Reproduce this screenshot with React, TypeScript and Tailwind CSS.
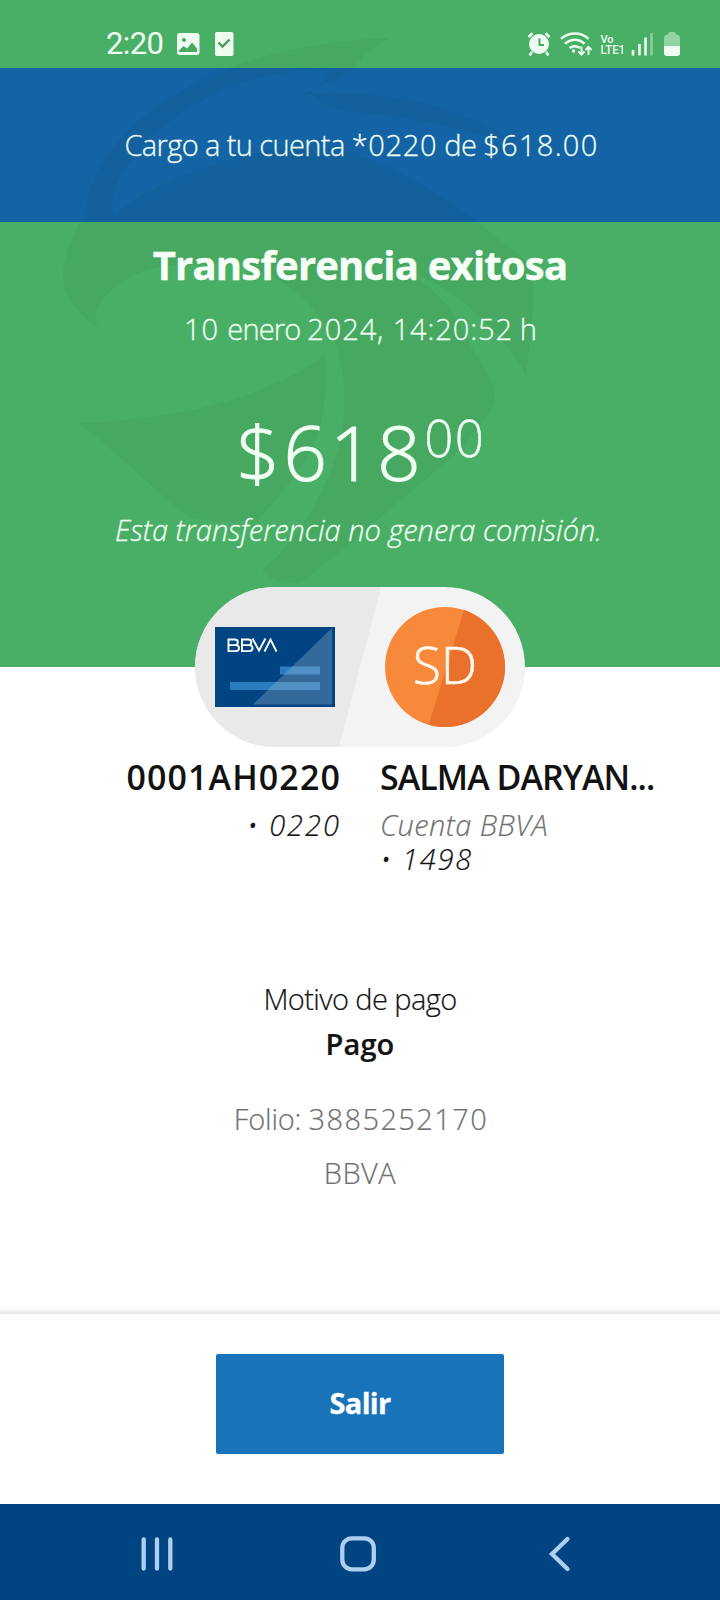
import type { ReactNode } from "react";

function Watermark() {
  return (
    <svg className="pointer-events-none absolute inset-0" width="720" height="667" viewBox="0 0 720 667" fill="#1a1a00" fillOpacity="0.043">
      <path d="M98 328C72 310 62 290 63 272C66 240 84 222 88 198C98 150 150 98 230 68C280 48 340 40 390 38C372 46 360 60 352 70C330 84 312 88 300 96C320 90 400 94 440 108C470 118 500 130 520 142C460 132 420 116 350 112C330 110 310 98 312 90C340 70 330 64 290 72C220 80 165 120 140 150C122 172 106 194 114 216C140 190 200 166 260 152C310 140 350 150 390 168C430 186 470 214 500 240C518 252 530 262 533 272C535 310 530 340 526 375C510 345 490 325 470 308C450 290 425 276 400 268C440 290 462 320 470 345C480 362 496 380 495 400C486 430 440 468 395 505C355 540 330 560 300 583C285 584 268 580 262 570C300 540 325 490 338 450C348 410 346 375 336 345C322 312 292 280 250 268C200 258 140 262 112 290C96 304 92 316 98 328Z" />
      <path d="M78 423C180 420 270 396 325 355C328 400 322 440 302 464C284 492 270 508 258 519C235 522 205 524 184 514C150 486 115 450 78 423Z" />
    </svg>
  );
}

function StatusBar() {
  return (
    <div className="flex h-[68px] items-start pl-[106px] text-[#eefdf0]">
      <span className="mt-[24px] h-[40px] w-[70px] font-[Roboto] text-[31px] leading-[40px] font-normal tracking-[-0.6px] [-webkit-text-stroke:0px]">2:20</span>
      <svg className="mt-[32px]" width="60" height="26" viewBox="176 32 60 26">
        <rect x="177" y="33" width="22.5" height="22" rx="3" fill="currentColor" />
        <circle cx="184" cy="40" r="2" fill="#49a762" />
        <path d="M179 52v-1.500l4.500-4.500 3.500 2.500 5-6 5 6v3.500Z" fill="#49a762" />
        <rect x="215" y="32" width="18.500" height="24" rx="2" fill="currentColor" />
        <path d="m218.500 42.500 4 4 7-7" fill="none" stroke="#459a5c" strokeWidth="2.400" />
      </svg>
      <svg className="mt-[30px] ml-[290px]" width="156" height="28" viewBox="526 30 156 28" fill="none" stroke="currentColor">
        <circle cx="539" cy="44" r="10" fill="currentColor" stroke="none" />
        <path d="m528.500 37 4-3.800M549.500 37l-4-3.800M532 52l-2.500 3.500M546 52l2.500 3.500" strokeWidth="2.600" />
        <path d="M539.500 38.500v6.500h4.500" stroke="#49a762" strokeWidth="2" />
        <path d="M561 38.800c8-7.200 20-7.200 27.500 0M565 43.800c6-5.300 13.500-5.300 19.500 0M569.500 48c3-2.500 7.500-2.500 10.500 0" strokeWidth="2.500" />
        <circle cx="573.500" cy="51" r="1.700" fill="currentColor" stroke="none" />
        <path d="M581.500 46.500v8m-3-3 3 3.200 3-3.200M588.500 55v-8m-3 3 3-3.200 3 3.200" strokeWidth="1.900" />
        <text x="600.500" y="42.500" fill="currentColor" stroke="none" className="font-[Roboto] text-[11px] font-medium">Vo</text>
        <text x="600.500" y="53.500" fill="currentColor" stroke="none" textLength="24.500" lengthAdjust="spacingAndGlyphs" className="font-[Roboto] text-[12px] font-medium">LTE1</text>
        <path d="M633 50v5.500M639.500 44v11.500M645.500 37.500v18" strokeWidth="2.600" />
        <path d="M651.500 33v22.500" strokeWidth="2.600" opacity="0.400" />
        <path d="M668 34.500q0-2.500 2-2.500h4q2 0 2 2.500 4 0 4 4V46h-16v-7.500q0-4 4-4Z" fill="currentColor" stroke="none" opacity="0.450" />
        <path d="M664 46h16v7q0 3-3 3h-10q-3 0-3-3Z" fill="currentColor" stroke="none" />
      </svg>
    </div>
  );
}

function Line({ className, children }: { className: string; children: ReactNode }) {
  return <p className={"text-center whitespace-nowrap " + className}>{children}</p>;
}

function AccountPill() {
  return (
    <svg className="relative mx-auto -mt-[80px] block" width="330" height="160" viewBox="195 587 330 160">
      <defs>
        <clipPath id="pill"><rect x="195" y="587" width="330" height="160" rx="80" /></clipPath>
        <clipPath id="avatar"><circle cx="445" cy="667" r="60" /></clipPath>
      </defs>
      <g clipPath="url(#pill)">
        <path d="M195 587h330v160H195Z" fill="#f3f3f3" />
        <path d="M195 587h186l-42 160H195Z" fill="#e9e9e9" />
      </g>
      <path d="M215 627h120v80H215Z" fill="#004481" />
      <path d="M280 666.500h40v8h-40ZM230 682h90v8h-90Z" fill="#2a7ebd" />
      <path d="M253 704.500 332 628v76.500Z" fill="#9db9d0" fillOpacity="0.330" />
      <g fill="none" stroke="#fff" strokeWidth="1.900">
        <path d="M228.500 639.500h6.500a2.800 2.800 0 0 1 0 5.600h-6.500M235 645.100h1a3 3 0 0 1 0 6h-7.500v-12.500" />
        <path d="M242 639.500h6.500a2.800 2.800 0 0 1 0 5.600h-6.500M248.500 645.100h1a3 3 0 0 1 0 6h-7.500v-12.500" />
        <path d="m252.500 638.500 6.500 12 6.500-12M264.500 651.500l6-12 6 12" />
      </g>
      <g clipPath="url(#avatar)">
        <path d="M385 607h120v120H385Z" fill="#f7893b" />
        <path d="M465 607h40v120h-77Z" fill="#e9712b" />
      </g>
      <text x="413" y="684" textLength="64" fill="#fff8ee" stroke="#fff8ee" strokeWidth="0.700" className="font-['Open_Sans'] text-[51px] font-light">SD</text>
    </svg>
  );
}

export default function App() {
  return (
    <main className="flex h-[1600px] w-[720px] flex-col overflow-hidden bg-white font-['Open_Sans',sans-serif] text-[29px] leading-[40px] font-light text-[#121212]">
      <section className="relative h-[667px] shrink-0 bg-[#49af66] text-[#f0fff2]">
        <StatusBar />
        <div className="h-[154px] bg-[#1464a5] pt-[57px]">
          <Line className="pl-[3px] tracking-[-0.6px] [-webkit-text-stroke:0.3px]">
            Cargo a tu cuenta <span className="tracking-[0.7px]">*0220</span> de <span className="tracking-[1.3px]">$618.00</span>
          </Line>
        </div>
        <Watermark />
        <div className="relative">
          <Line className="mt-[13px] text-[40px] leading-[60px] font-bold tracking-[-0.8px] text-[#f6fff6] [-webkit-text-stroke:0.4px]">Transferencia exitosa</Line>
          <Line className="mt-[14px] tracking-[0.9px] [-webkit-text-stroke:0.3px]">
            10 <span className="tracking-[-0.8px]">enero </span>2024, 14:20:52<span className="tracking-[-0.8px]"> h</span>
          </Line>
          <div className="mt-[53px] flex h-[100px] justify-center pl-[2px]">
            <span className="text-[76px] leading-[100px] tracking-[3.5px] [-webkit-text-stroke:1.1px]">$618</span>
            <span className="text-[51px] leading-[71px] tracking-[1.5px] [-webkit-text-stroke:0.4px]">00</span>
          </div>
          <Line className="mt-[8px] pr-[3px] italic [-webkit-text-stroke:0.3px]">Esta transferencia no genera comisión.</Line>
        </div>
      </section>
      <AccountPill />
      <section className="mt-[8px] grid grid-cols-[341px_1fr] gap-x-[39px] whitespace-nowrap [-webkit-text-stroke:0.2px]">
        <div className="text-right">
          <h2 className="text-[34px] leading-[44px] font-semibold tracking-[1.1px] [-webkit-text-stroke:0px]">0001AH0220</h2>
          <p className="mt-[9px] leading-[34px] tracking-[2px] italic">• 0220</p>
        </div>
        <div>
          <h2 className="text-[34px] leading-[44px] font-semibold tracking-[-0.95px] [-webkit-text-stroke:0px]">SALMA DARYAN...</h2>
          <p className="mt-[9px] leading-[34px] tracking-[0.4px] text-[#707070] italic">Cuenta BBVA</p>
          <p className="leading-[34px] tracking-[1.8px] italic">• 1498</p>
        </div>
      </section>
      <section className="mt-[103px] [-webkit-text-stroke:0.2px]">
        <Line className="tracking-[-0.6px]">Motivo de pago</Line>
        <Line className="mt-[5px] font-semibold tracking-[0.1px]">Pago</Line>
        <Line className="mt-[35px] pl-[2px] tracking-[-0.2px] text-[#707070]">Folio: <span className="tracking-[1.4px]">3885252170</span></Line>
        <Line className="mt-[14px] tracking-[0.5px] text-[#707070]">BBVA</Line>
      </section>
      <footer className="mt-auto">
        <div className="h-[6px] bg-linear-to-b from-white to-[#e6e6e6]" />
        <div className="flex h-[190px] items-start justify-center pt-[40px]">
          <button className="h-[100px] w-[288px] rounded-[2px] bg-[#1973b8] pb-[3px] font-bold tracking-[-0.7px] text-white [-webkit-text-stroke:0.3px]">Salir</button>
        </div>
        <nav className="flex h-[96px] items-center justify-center bg-[#004481]">
          <svg width="720" height="96" viewBox="0 1504 720 96" fill="none" stroke="#b0cff0" strokeWidth="4.300" strokeLinecap="round">
            <path d="M143.700 1539.500v29M157 1539.500v29M170.300 1539.500v29" />
            <rect x="342.300" y="1538.300" width="31.500" height="31" rx="9.500" />
            <path d="m567.500 1539-15.500 15 15.500 15" />
          </svg>
        </nav>
      </footer>
    </main>
  );
}
